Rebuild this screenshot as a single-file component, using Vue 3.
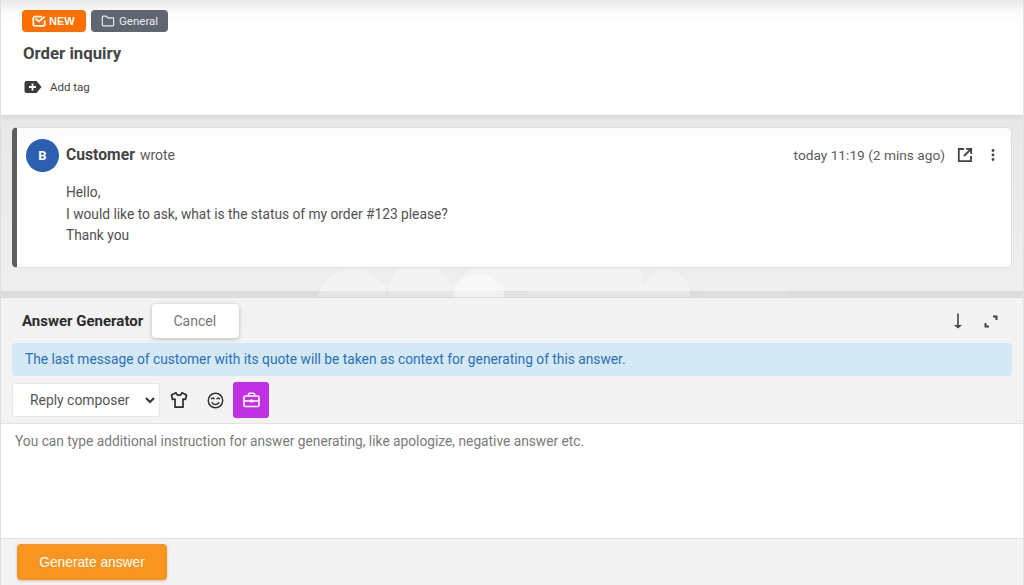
<script setup>
const lines = ['Hello,', 'I would like to ask, what is the status of my order #123 please?', 'Thank you']
</script>

<template>
  <div class="page">
    <header class="ticket">
      <div class="badges">
        <span class="badge new">
          <svg width="14" height="14" viewBox="0 0 16 16" fill="none" stroke="currentColor" stroke-width="2"><path d="M14.500 7.500V12a1.500 1.500 0 0 1-1.500 1.500H3A1.500 1.500 0 0 1 1.500 12V4.500A1.500 1.500 0 0 1 3 3h8.500"/><path d="M4 5.500 8 8.500 14.500 3"/></svg>
          NEW
        </span>
        <span class="badge folder">
          <svg width="14" height="14" viewBox="0 0 16 16" fill="none" stroke="currentColor" stroke-width="1.300"><path d="M1.500 12.500V3.500a1 1 0 0 1 1-1h3.500l1.500 2h6a1 1 0 0 1 1 1v7a1 1 0 0 1-1 1h-11a1 1 0 0 1-1-1Z"/></svg>
          General
        </span>
      </div>
      <h1>Order inquiry</h1>
      <div class="tag">
        <svg width="18" height="14" viewBox="0 0 18 14"><path d="M2.500 1H12.500l5 6-5 6H2.500A2 2 0 0 1 .5 11V3A2 2 0 0 1 2.500 1Z" fill="#3a3a3a"/><path d="M5 7h7M8.500 3.500v7" stroke="#fff" stroke-width="1.800"/></svg>
        <span>Add tag</span>
      </div>
    </header>

    <section class="thread">
      <article class="message">
        <div class="msg-head">
          <span class="avatar">B</span>
          <span class="author">Customer</span>
          <span class="wrote">wrote</span>
          <span class="time">today 11:19 (2 mins ago)</span>
          <svg class="open" width="16" height="16" viewBox="0 0 16 16" fill="none" stroke="#444" stroke-width="1.800"><path d="M7 2H1.800v12.200H14V9"/><path d="M7 9l6.500-6.500M9 1.800h5.200V7"/></svg>
          <svg class="more" width="4" height="14" viewBox="0 0 4 14" fill="#444"><circle cx="2" cy="2.500" r="1.400"/><circle cx="2" cy="7" r="1.400"/><circle cx="2" cy="11.500" r="1.400"/></svg>
        </div>
        <div class="msg-body">
          <p v-for="line in lines" :key="line">{{ line }}</p>
        </div>
      </article>
      <div class="clouds" aria-hidden="true">
        <i class="c c1"></i><i class="c c2"></i><i class="c c4"></i><i class="c c3"></i><i class="c c5"></i><i class="c c6"></i>
      </div>
    </section>

    <div class="splitter"><span class="grip"></span></div>

    <section class="composer">
      <div class="gen-head">
        <strong>Answer Generator</strong>
        <button class="cancel">Cancel</button>
        <span class="spacer"></span>
        <svg class="down" width="10" height="16" viewBox="0 0 10 16" fill="#444"><path d="M4.200 0.500h1.600v11.500H9L5 15.500 1 12h3.200Z"/></svg>
        <svg class="expand" width="14" height="13" viewBox="0 0 14 13" fill="none" stroke="#444" stroke-width="2"><path d="M9 1.500h3.500V5M1.500 8v3.500H5"/></svg>
      </div>
      <div class="notice">The last message of customer with its quote will be taken as context for generating of this answer.</div>
      <div class="tools">
        <div class="select">
          <span>Reply composer</span>
          <svg width="10" height="7" viewBox="0 0 10 7" fill="none" stroke="#333" stroke-width="2"><path d="M1 1l4 4 4-4"/></svg>
        </div>
        <button class="tool">
          <svg width="18" height="18" viewBox="0 0 18 18" fill="none" stroke="#2c2c2c" stroke-width="1.700" stroke-linejoin="round"><path d="M6 1.800 1.500 4l1 4.500L5 8v8.200h8V8l2.500.5 1-4.500L12 1.800c-.5 1.700-1.600 2.500-3 2.500s-2.500-.8-3-2.500Z"/></svg>
        </button>
        <button class="tool">
          <svg width="17" height="17" viewBox="0 0 16 16" fill="none" stroke="#333" stroke-width="1.400"><circle cx="8" cy="8" r="6.800"/><path d="M4.800 10c.7 1.200 1.800 1.800 3.200 1.800s2.500-.6 3.200-1.800" stroke-linecap="round"/><path d="M4.300 6.300c.6-.6 1.700-.6 2.300 0M9.400 6.300c.6-.6 1.700-.6 2.300 0" stroke-linecap="round"/></svg>
        </button>
        <button class="tool active">
          <svg width="17" height="16" viewBox="0 0 17 16" fill="none" stroke="#fff" stroke-width="1.600"><rect x="1" y="4" width="15" height="10.500" rx="1.500"/><path d="M5.500 4V2.300a1 1 0 0 1 1-1h4a1 1 0 0 1 1 1V4M1 9h15"/><rect x="6.800" y="7.600" width="3.400" height="2.800" fill="#fff" stroke="none"/></svg>
        </button>
      </div>
      <div class="editor">You can type additional instruction for answer generating, like apologize, negative answer etc.</div>
      <div class="actions">
        <button class="generate">Generate answer</button>
      </div>
    </section>
  </div>
</template>

<style>
html, body { margin: 0; background: #ededed; }
</style>

<style scoped>
.page {
  width: 1024px; height: 585px; overflow: hidden; display: flex; flex-direction: column;
  font-family: Roboto, "Liberation Sans", sans-serif; color: #444; background: linear-gradient(#e8e8e8 115px, #eeeeee 280px);
  box-sizing: border-box; border-left: 1px solid #dedede; border-right: 1px solid #e2e2e2;
}
.ticket {
  height: 115px; flex: none; box-sizing: border-box; padding: 10px 0 0 21px;
  background: linear-gradient(#e9e9e9 0, #fbfbfb 12px, #fff 24px);
  box-shadow: 0 2px 6px rgba(0,0,0,.10); position: relative; z-index: 3;
}
.badges { display: flex; gap: 5px; }
.badge {
  height: 22px; border-radius: 4px; display: inline-flex; align-items: center; gap: 3px;
  color: #fff; font-size: 11.500px; box-sizing: border-box;
}
.new { width: 64px; background: #ff6f00; font-weight: 700; padding-left: 10px; font-family: "Liberation Sans", sans-serif; font-size: 11px; }
.folder { width: 77px; background: #5f6670; padding-left: 10px; color: #eee; gap: 4px; }
h1 { margin: 11px 0 0 1px; font-size: 16.800px; line-height: 20px; font-weight: 700; color: #444; }
.tag { display: flex; align-items: center; gap: 8px; margin: 17px 0 0 2px; font-size: 11.500px; height: 14px; color: #444; }
.thread { height: 182px; flex: none; position: relative; z-index: 2; padding: 12px 11px 0; box-sizing: border-box; overflow: hidden; }
.message {
  position: relative; z-index: 1; height: 141px; box-sizing: border-box; background: linear-gradient(#fafafa, #fff 20px);
  border: 1px solid #dedede; border-left: 5px solid #5e5e5e; border-radius: 5px;
}
.msg-head { display: flex; align-items: center; height: 32px; padding: 11px 0 0 9px; }
.avatar {
  width: 33px; height: 33px; border-radius: 50%; background: #2c5fb0; color: #fff; font-size: 13px; font-weight: 700;
  display: flex; align-items: center; justify-content: center;
}
.author { margin: 0 0 2px 7px; font-size: 15.700px; font-weight: 700; color: #444; }
.wrote { margin-left: 5px; font-size: 14px; color: #5c5c5c; }
.time { margin-left: auto; font-size: 13.700px; color: #5c5c5c; }
.open { margin-left: 12px; }
.more { margin: 0 16px 0 18px; }
.msg-body { padding: 11px 0 0 49px; font-size: 13.750px; line-height: 21.500px; color: #505050; }
.msg-body p { margin: 0; }
.clouds { position: absolute; left: 0; top: 153px; width: 1022px; height: 29px; overflow: hidden; }
.c { position: absolute; top: 0; background: rgba(255,255,255,.3); border-radius: 50%; }
.c1 { left: 316px; top: 1px; width: 72px; height: 72px; }
.c2 { left: 387px; top: 1px; width: 64px; height: 28px; border-radius: 0; clip-path: polygon(16% 0, 82% 0, 100% 60%, 100% 100%, 0 100%, 0 60%); }
.c3 { left: 452px; top: 6px; width: 52px; height: 52px; background: rgba(255,255,255,.45); }
.c4 { left: 451px; top: 1px; width: 191px; height: 28px; border-radius: 0; clip-path: polygon(10% 0, 99% 0, 100% 60%, 100% 100%, 0 100%, 0 60%); }
.c5 { left: 641px; top: 2px; width: 48px; height: 48px; }
.c6 { left: 700px; top: 10px; width: 90px; height: 50px; background: rgba(255,255,255,.1); }
.splitter { position: relative; z-index: 1; height: 6px; margin-top: -6px; flex: none; background: #dcdcdc; display: flex; justify-content: center; align-items: center; border-bottom: 1px solid #dcdcdc; }
.grip { width: 32px; height: 2px; border-top: 1px solid #ccc; border-bottom: 1px solid #ccc; margin-bottom: 2px; }
.composer { flex: 1; background: #f3f3f3; display: flex; flex-direction: column; position: relative; z-index: 4; }
.gen-head { display: flex; align-items: center; height: 45px; padding: 1px 25px 0 21px; box-sizing: border-box; flex: none; }
.gen-head strong { font-size: 15px; color: #2b2b2b; }
.cancel {
  margin-left: 9px; width: 87px; height: 34px; background: #fff; border: none; border-radius: 4px; font: inherit; font-size: 14px;
  color: #777; box-shadow: 0 1px 4px rgba(0,0,0,.25); padding: 0 2px 0 0;
}
.spacer { flex: 1; }
.expand { margin-left: 21px; }
.notice {
  margin: 0 11px; height: 33px; line-height: 33px; flex: none; background: #d5e9f4; border-radius: 4px; padding-left: 13px;
  color: #2a6fbd; font-size: 13.770px;
}
.tools { display: flex; align-items: center; height: 36px; margin: 6px 0 0 11px; flex: none; }
.select {
  width: 148px; height: 34px; background: #fff; border: 1px solid #e6e6e6; border-radius: 3px; display: flex; align-items: center;
  justify-content: space-between; padding: 0 4px 0 17px; box-sizing: border-box; font-size: 13.900px; color: #555; margin-right: 1px;
}
.tool { width: 36px; height: 36px; border: none; background: transparent; border-radius: 3px; padding: 0; display: flex; align-items: center; justify-content: center; }
.tool.active { background: #c230e3; }
.editor {
  margin-top: 5px; height: 116px; flex: none; background: #fff; border-top: 1px solid #e2e2e2; border-bottom: 1px solid #e2e2e2;
  box-sizing: border-box; padding: 9px 14px; font-size: 13.760px; line-height: 16px; color: #7a7a7a;
}
.actions { padding: 5px 0 0 16px; }
.generate {
  width: 150px; height: 36px; border: none; border-radius: 4px; background: #f89420; color: #fff; font-size: 13.750px;
  font-family: "Liberation Sans", Arial, sans-serif; box-shadow: 0 1px 3px rgba(0,0,0,.2);
}
</style>
